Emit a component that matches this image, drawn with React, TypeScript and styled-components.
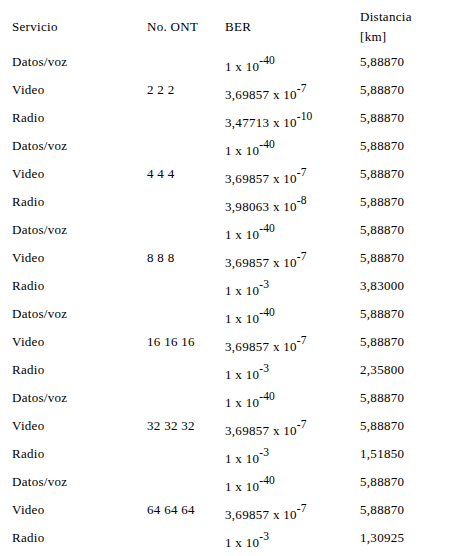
import styled, { createGlobalStyle } from "styled-components";

const GlobalStyle = createGlobalStyle`
  body {
    margin: 0;
    background: #ffffff;
    color: #000000;
    font-family: "Liberation Serif", "Times New Roman", serif;
    font-size: 13px;
  }
`;

const Table = styled.div`
  width: 449px;
  padding: 7px 0 0 12px;
  box-sizing: border-box;
  display: flex;
  flex-direction: column;
`;

const Row = styled.div<{ $head?: boolean }>`
  display: grid;
  grid-template-columns: 135px 78px 135px 1fr;
  align-items: center;
  height: ${(p) => (p.$head ? "40px" : "28px")};
  line-height: 20px;
  letter-spacing: 0.3px;
`;

const Cell = styled.div``;

const BerCell = styled.div`
  padding-top: 10px;
  white-space: nowrap;
`;

const Sup = styled.sup`
  font-size: 11.5px;
  line-height: 0;
  vertical-align: 7px;
  letter-spacing: 0;
`;

type Item = { servicio: string; ont?: string; base: string; exp: string; dist: string };

const groups: { ont: string; radio: [string, string, string] }[] = [
  { ont: "2 2 2", radio: ["3,47713 x 10", "-10", "5,88870"] },
  { ont: "4 4 4", radio: ["3,98063 x 10", "-8", "5,88870"] },
  { ont: "8 8 8", radio: ["1 x 10", "-3", "3,83000"] },
  { ont: "16 16 16", radio: ["1 x 10", "-3", "2,35800"] },
  { ont: "32 32 32", radio: ["1 x 10", "-3", "1,51850"] },
  { ont: "64 64 64", radio: ["1 x 10", "-3", "1,30925"] },
];

const rows: Item[] = groups.flatMap((g) => [
  { servicio: "Datos/voz", base: "1 x 10", exp: "-40", dist: "5,88870" },
  { servicio: "Video", ont: g.ont, base: "3,69857 x 10", exp: "-7", dist: "5,88870" },
  { servicio: "Radio", base: g.radio[0], exp: g.radio[1], dist: g.radio[2] },
]);

const App = () => (
  <>
    <GlobalStyle />
    <Table>
      <Row $head>
        <Cell>Servicio</Cell>
        <Cell>No. ONT</Cell>
        <Cell>BER</Cell>
        <Cell>
          Distancia
          <br />
          [km]
        </Cell>
      </Row>
      {rows.map((r, i) => (
        <Row key={i}>
          <Cell>{r.servicio}</Cell>
          <Cell>{r.ont}</Cell>
          <BerCell>
            {r.base}
            <Sup>{r.exp}</Sup>
          </BerCell>
          <Cell>{r.dist}</Cell>
        </Row>
      ))}
    </Table>
  </>
);

export default App;
